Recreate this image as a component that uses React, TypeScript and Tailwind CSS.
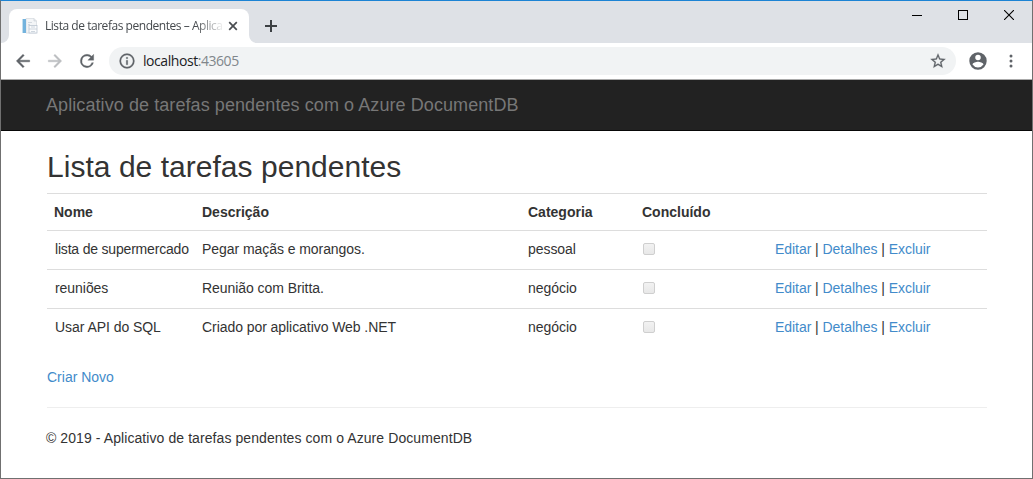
import type { ReactNode } from "react";

const tasks = [
  { name: "lista de supermercado", description: "Pegar maçãs e morangos.", category: "pessoal" },
  { name: "reuniões", description: "Reunião com Britta.", category: "negócio" },
  { name: "Usar API do SQL", description: "Criado por aplicativo Web .NET", category: "negócio" },
];

function Link({ children }: { children: ReactNode }) {
  return <a href="#" className="text-[#428bca]">{children}</a>;
}

function PageIcon() {
  return (
    <svg width="16" height="16" viewBox="0 0 16 16" className="shrink-0">
      <path d="M4 .5h8l2.500 2.500v12H4z" fill="#f3f5f7" stroke="#d8dde2" strokeWidth=".8" />
      <path d="M12 .5v2.500h2.500" fill="#e4e8ec" stroke="#ccd2d8" strokeWidth=".7" />
      <rect x="0" y="1" width="4" height="14" fill="#74b3dd" />
      <rect x="0" y="1" width="1" height="14" fill="#c3dfef" />
      <path d="M6 4.500h4M6 6.500h2" stroke="#d3d9df" />
      <rect x="7" y="7.500" width="8" height="7.500" fill="#fbfcfd" stroke="#bcc6d1" strokeWidth=".8" />
      <path d="M7 11h8M9 9h4M9 13.500h4" stroke="#c3ccd6" strokeWidth=".8" />
    </svg>
  );
}

function TabStrip() {
  return (
    <div className="flex h-[42px] bg-[#dee1e6]">
      <svg width="8" height="8" viewBox="0 0 8 8" className="shrink-0 self-end"><path d="M8 0v8H0a8 8 0 0 0 8-8z" fill="#fff" /></svg>
      <div className="mt-2 flex h-[34px] w-[240px] shrink-0 items-center rounded-t-lg bg-white pl-[13px]">
        <PageIcon />
        <div className="ml-[7px] w-[178px] whitespace-nowrap font-['Open_Sans',sans-serif] text-[12px] leading-4 tracking-[-0.46px] text-[#45494d] [mask-image:linear-gradient(to_right,black_150px,transparent_180px)]">
          Lista de tarefas pendentes – Aplica
        </div>
        <svg width="10" height="10" viewBox="0 0 10 10" className="ml-[5px] shrink-0"><path d="M1.200 1.200l7.600 7.600M8.800 1.200L1.200 8.800" stroke="#4a4d51" strokeWidth="1.700" /></svg>
      </div>
      <svg width="8" height="8" viewBox="0 0 8 8" className="shrink-0 self-end"><path d="M0 0v8h8a8 8 0 0 1-8-8z" fill="#fff" /></svg>
      <svg width="12" height="12" viewBox="0 0 12 12" className="ml-[8px] mt-[19px] shrink-0"><path d="M6 0v12M0 6h12" stroke="#3c4043" strokeWidth="2" /></svg>
      <div className="ml-auto mr-[18px] mt-[9px] flex h-[10px] gap-9">
        <svg width="10" height="10" viewBox="0 0 10 10" shapeRendering="crispEdges"><path d="M0 5.500h10" stroke="#000" /></svg>
        <svg width="10" height="10" viewBox="0 0 10 10" shapeRendering="crispEdges"><path d="M.5.5h9v9h-9z" fill="none" stroke="#000" /></svg>
        <svg width="10" height="10" viewBox="0 0 10 10"><path d="M0 0l10 10M10 0L0 10" stroke="#000" strokeWidth="1.100" /></svg>
      </div>
    </div>
  );
}

function Toolbar() {
  return (
    <div className="flex h-9 items-center bg-white pl-3 text-[#5f6368]">
      <svg width="20" height="20" viewBox="0 0 24 24" fill="currentColor" className="shrink-0"><path d="M20 11H7.830l5.590-5.590L12 4l-8 8 8 8 1.410-1.410L7.830 13H20v-2z" stroke="currentColor" strokeWidth=".5" /></svg>
      <svg width="20" height="20" viewBox="0 0 24 24" fill="#bcbec1" className="ml-3 shrink-0"><path d="M12 4l-1.410 1.410L16.170 11H4v2h12.170l-5.580 5.590L12 20l8-8z" stroke="#bcbec1" strokeWidth=".5" /></svg>
      <svg width="20" height="20" viewBox="0 0 24 24" fill="currentColor" className="ml-3 shrink-0"><path d="M17.650 6.350A7.960 7.960 0 0 0 12 4a8 8 0 1 0 7.730 10h-2.080A6 6 0 1 1 12 6c1.660 0 3.140.69 4.220 1.780L13 11h7V4l-2.350 2.350z" stroke="currentColor" strokeWidth=".4" /></svg>
      <div className="ml-3 flex h-7 w-[847px] shrink-0 items-center rounded-full bg-[#f1f3f4] px-[9px]">
        <svg width="18" height="18" viewBox="0 0 24 24" fill="currentColor"><path d="M11 7h2v2h-2zm0 4h2v6h-2zm1-9a10 10 0 1 0 0 20 10 10 0 0 0 0-20zm0 18a8 8 0 1 1 0-16 8 8 0 0 1 0 16z" stroke="currentColor" strokeWidth=".3" /></svg>
        <span className="ml-[7px] font-['Open_Sans',sans-serif] text-[14px] leading-5 tracking-[-0.44px] text-[#202124]">localhost<span className="text-[#80868b]">:43605</span></span>
        <svg width="18" height="18" viewBox="0 0 24 24" fill="currentColor" className="ml-auto"><path d="M22 9.240l-7.190-.62L12 2 9.190 8.630 2 9.240l5.460 4.730L5.820 21 12 17.270 18.180 21l-1.630-7.030L22 9.240zM12 15.400l-3.760 2.270 1-4.280-3.320-2.880 4.380-.38L12 6.100l1.710 4.040 4.380.38-3.320 2.880 1 4.280L12 15.400z" stroke="currentColor" strokeWidth=".3" /></svg>
      </div>
      <svg width="22" height="22" viewBox="0 0 24 24" fill="currentColor" className="ml-[11px] shrink-0"><path d="M12 2.500a9.500 9.500 0 1 0 0 19 9.500 9.500 0 0 0 0-19zm0 2.800a3 3 0 1 1 0 6 3 3 0 0 1 0-6zm0 13.700a7.200 7.200 0 0 1-6-3.220c.03-1.990 4-3.080 6-3.080 1.990 0 5.970 1.090 6 3.080a7.200 7.200 0 0 1-6 3.220z" /></svg>
      <svg width="4" height="14" viewBox="0 0 4 14" fill="currentColor" className="ml-[20px] shrink-0"><circle cx="2" cy="2" r="1.500" /><circle cx="2" cy="7" r="1.500" /><circle cx="2" cy="12" r="1.500" /></svg>
    </div>
  );
}

const columns = "grid grid-cols-[147px_326px_115px_132px_220px] border-t border-[#ddd] pl-2 leading-5";

export default function App() {
  return (
    <div className="flex h-[479px] w-[1033px] flex-col overflow-hidden border border-[#707070] border-t-[#1c83d4] bg-white font-['Liberation_Sans',Arial,sans-serif] text-[14px] text-[#333]">
      <TabStrip />
      <Toolbar />
      <nav className="h-[52px] shrink-0 border-b border-t border-b-[#080808] border-t-[#aaa] bg-[#222] pl-[45px] pt-[15px] text-[18px] leading-5 tracking-[0.08px] text-[#777]">
        Aplicativo de tarefas pendentes com o Azure DocumentDB
      </nav>
      <main className="ml-[46px] w-[940px]">
        <h2 className="mb-[10px] mt-[19px] text-[30px] font-normal leading-[33px] tracking-[0.03px]">Lista de tarefas pendentes</h2>
        <div>
          <div className={`${columns} h-[37px] pt-2 font-bold`}>
            <span className="-ml-px">Nome</span><span>Descrição</span><span>Categoria</span><span className="-ml-px">Concluído</span><span />
          </div>
          {tasks.map((task) => (
            <div key={task.name} className={`${columns} h-[39px] pt-2`}>
              <span className={task.name.length > 20 ? "tracking-[-0.19px]" : "tracking-[-0.05px]"}>{task.name}</span>
              <span className="tracking-[-0.06px]">{task.description}</span>
              <span className="-ml-px pl-px tracking-[-0.05px]">{task.category}</span>
              <span><input type="checkbox" disabled className="mt-[4px] block size-3 appearance-none rounded-[2px] border border-[#cfcfcf] bg-linear-to-b from-[#f2f2f2] to-[#e8e8e8]" /></span>
              <span className="tracking-[-0.05px]"><Link>Editar</Link> | <Link>Detalhes</Link> | <Link>Excluir</Link></span>
            </div>
          ))}
        </div>
        <p className="mt-5 leading-5"><Link>Criar Novo</Link></p>
        <hr className="mb-5 mt-5 border-[#eee]" />
        <footer className="-ml-px leading-5 tracking-[0.08px]">© 2019 - Aplicativo de tarefas pendentes com o Azure DocumentDB</footer>
      </main>
    </div>
  );
}
